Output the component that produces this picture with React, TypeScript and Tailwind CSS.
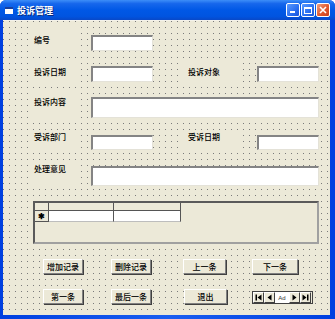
import React from "react";

const font = "font-['Noto_Sans_CJK_SC','Noto_Sans',sans-serif]";
const dots =
	"bg-[#ece9d8] bg-[image:conic-gradient(at_1px_1px,transparent_270deg,#7a7a7a_0)] bg-size-[6px_6px]";

function Label({
	text,
	w,
	h,
	pt,
}: {
	text: string;
	w: string;
	h: string;
	pt: string;
}) {
	return (
		<div
			className={`${w} ${h} ${pt} shrink-0 bg-[#ece9d8] pl-[6px] text-[8px] font-medium leading-[10px] text-black`}
		>
			{text}
		</div>
	);
}

function TextBox({ w, h, mt }: { w: string; h: string; mt: string }) {
	return (
		<div
			className={`${w} ${h} ${mt} shrink-0 bg-white border-t-2 border-l-2 border-r border-b border-t-[#848484] border-l-[#848484] border-r-[#e4e2d8] border-b-[#e4e2d8]`}
		/>
	);
}

function Btn({ text, w, ml }: { text: string; w: string; ml: string }) {
	return (
		<div
			className={`${w} ${ml} h-[15px] shrink-0 flex items-center justify-center bg-[#ece9d8] border border-t-white border-l-white border-r-[#808080] border-b-[#808080] shadow-[1px_1px_0_#404040] text-[8px] font-medium leading-none text-black`}
		>
			{text}
		</div>
	);
}

function NavBtn({ kind }: { kind: "first" | "prev" | "next" | "last" }) {
	return (
		<div className="w-[11px] h-full shrink-0 flex items-center justify-center bg-[#ece9d8] border border-t-white border-l-white border-r-[#404040] border-b-[#404040]">
			<svg width="7" height="7" viewBox="0 0 7 7">
				{kind === "first" && (
					<>
						<rect x="0.5" y="0.5" width="1.5" height="6" fill="#000" />
						<polygon points="6.5,0.5 2.5,3.5 6.5,6.5" fill="#000" />
					</>
				)}
				{kind === "prev" && (
					<polygon points="5.5,0.5 1.5,3.5 5.5,6.5" fill="#000" />
				)}
				{kind === "next" && (
					<polygon points="1.5,0.5 5.5,3.5 1.5,6.5" fill="#000" />
				)}
				{kind === "last" && (
					<>
						<polygon points="0.5,0.5 4.5,3.5 0.5,6.5" fill="#000" />
						<rect x="5" y="0.5" width="1.5" height="6" fill="#000" />
					</>
				)}
			</svg>
		</div>
	);
}

function TitleButtons() {
	return (
		<div className="ml-auto mr-[5px] flex gap-[1px]">
			<div className="w-[14px] h-[14px] rounded-[2px] border border-white bg-[linear-gradient(135deg,#5b9bff,#2a6ef0_60%,#1b55d8)] flex items-end pl-[3px] pb-[3px]">
				<div className="w-[5px] h-[2px] bg-white" />
			</div>
			<div className="w-[14px] h-[14px] rounded-[2px] border border-white bg-[linear-gradient(135deg,#5b9bff,#2a6ef0_60%,#1b55d8)] flex items-center justify-center">
				<div className="w-[8px] h-[7px] border border-white border-t-2" />
			</div>
			<div className="w-[14px] h-[14px] rounded-[2px] border border-white bg-[linear-gradient(135deg,#f0a080,#e0582e_55%,#c8401c)] flex items-center justify-center">
				<svg width="8" height="8" viewBox="0 0 8 8">
					<path d="M1 1 L7 7 M7 1 L1 7" stroke="#fff" strokeWidth="1.6" />
				</svg>
			</div>
		</div>
	);
}

export default function App() {
	return (
		<div
			className={`${font} w-[335px] h-[319px] flex flex-col overflow-hidden rounded-t-[6px] bg-[linear-gradient(to_right,#0040e0,#1a5ef0_50%,#0040e0)]`}
		>
			{/* title bar */}
			<div className="h-[20px] shrink-0 flex items-center pl-[5px] bg-[linear-gradient(to_bottom,#3d8ef8_0%,#1767ec_18%,#0058e6_50%,#0054e0_82%,#0848c8_100%)]">
				<div className="w-[8px] h-[7px] bg-white border-t-2 border-[#1a3f9c] mr-[4px]" />
				<span className="text-[9px] font-bold text-white leading-none [text-shadow:1px_1px_0_#0a2a7a]">
					投诉管理
				</span>
				<TitleButtons />
			</div>

			{/* form body */}
			<div
				className={`${dots} flex-1 ml-[3px] mr-[5px] mb-[4px] border-t border-[#f4f2ea] flex flex-col`}
			>
				{/* row 编号 */}
				<div className="flex mt-[6px] ml-[25px]">
					<Label text="编号" w="w-[52px]" h="h-[25px]" pt="pt-[8px]" />
					<TextBox w="w-[62px] ml-[11px]" h="h-[16px]" mt="mt-[8px]" />
				</div>

				{/* row 投诉日期 / 投诉对象 */}
				<div className="flex mt-[10px] ml-[25px]">
					<Label text="投诉日期" w="w-[52px]" h="h-[21px]" pt="pt-[5px]" />
					<TextBox w="w-[62px] ml-[11px]" h="h-[16px]" mt="mt-[4px]" />
					<Label
						text="投诉对象"
						w="w-[61px] ml-[29px]"
						h="h-[21px]"
						pt="pt-[5px]"
					/>
					<TextBox w="w-[62px] ml-[14px]" h="h-[16px]" mt="mt-[4px]" />
				</div>

				{/* row 投诉内容 */}
				<div className="flex mt-[10px] ml-[25px]">
					<Label text="投诉内容" w="w-[52px]" h="h-[25px]" pt="pt-[4px]" />
					<TextBox w="w-[228px] ml-[11px]" h="h-[21px]" mt="mt-[4px]" />
				</div>

				{/* row 受诉部门 / 受诉日期 */}
				<div className="flex mt-[12px] ml-[25px]">
					<Label text="受诉部门" w="w-[52px]" h="h-[22px]" pt="pt-[2px]" />
					<TextBox w="w-[62px] ml-[11px]" h="h-[15px]" mt="mt-[5px]" />
					<Label
						text="受诉日期"
						w="w-[61px] ml-[29px]"
						h="h-[22px]"
						pt="pt-[2px]"
					/>
					<TextBox w="w-[62px] ml-[14px]" h="h-[15px]" mt="mt-[5px]" />
				</div>

				{/* row 处理意见 */}
				<div className="flex mt-[10px] ml-[25px]">
					<Label text="处理意见" w="w-[52px]" h="h-[25px]" pt="pt-[2px]" />
					<TextBox w="w-[228px] ml-[11px]" h="h-[20px]" mt="mt-[4px]" />
				</div>

				{/* subform */}
				<div className="ml-[30px] mt-[14px] w-[286px] h-[43px] bg-[#ece9d8] border-2 border-[#5a5a5a] border-r-[#a0a0a0] border-b-[#a0a0a0]">
					<div className="flex w-[146px] h-[8px] bg-[#ece9d8]">
						<div className="w-[14px] h-full border-r border-b border-[#555555]" />
						<div className="w-[65px] h-full border-r border-b border-[#555555]" />
						<div className="w-[67px] h-full border-r border-b border-[#555555]" />
					</div>
					<div className="flex w-[146px] h-[11px]">
						<div className="w-[14px] h-full border-r border-b border-[#555555] bg-[#ece9d8] flex items-center justify-center text-[8px] font-bold leading-none text-black">
							✱
						</div>
						<div className="w-[65px] h-full bg-white border-r border-b border-r-[#555555] border-b-[#bdbdbd]" />
						<div className="w-[67px] h-full bg-white border-r border-b border-r-[#555555] border-b-[#bdbdbd]" />
					</div>
				</div>

				{/* buttons row 1 */}
				<div className="flex mt-[15px]">
					<Btn text="增加记录" w="w-[40px]" ml="ml-[40px]" />
					<Btn text="删除记录" w="w-[40px]" ml="ml-[28px]" />
					<Btn text="上一条" w="w-[43px]" ml="ml-[32px]" />
					<Btn text="下一条" w="w-[46px]" ml="ml-[26px]" />
				</div>

				{/* buttons row 2 */}
				<div className="flex mt-[15px] items-start">
					<Btn text="第一条" w="w-[40px]" ml="ml-[40px]" />
					<Btn text="最后一条" w="w-[40px]" ml="ml-[28px]" />
					<Btn text="退出" w="w-[43px]" ml="ml-[33px]" />
					<div className="ml-[25px] mt-[2px] w-[61px] h-[13px] flex border border-[#404040] bg-[#ece9d8]">
						<NavBtn kind="first" />
						<NavBtn kind="prev" />
						<div className="w-[14px] h-full bg-white flex items-center justify-center text-[6px] leading-none text-[#333] font-['Liberation_Sans',sans-serif]">
							Ad
						</div>
						<NavBtn kind="next" />
						<NavBtn kind="last" />
					</div>
				</div>
			</div>
		</div>
	);
}
